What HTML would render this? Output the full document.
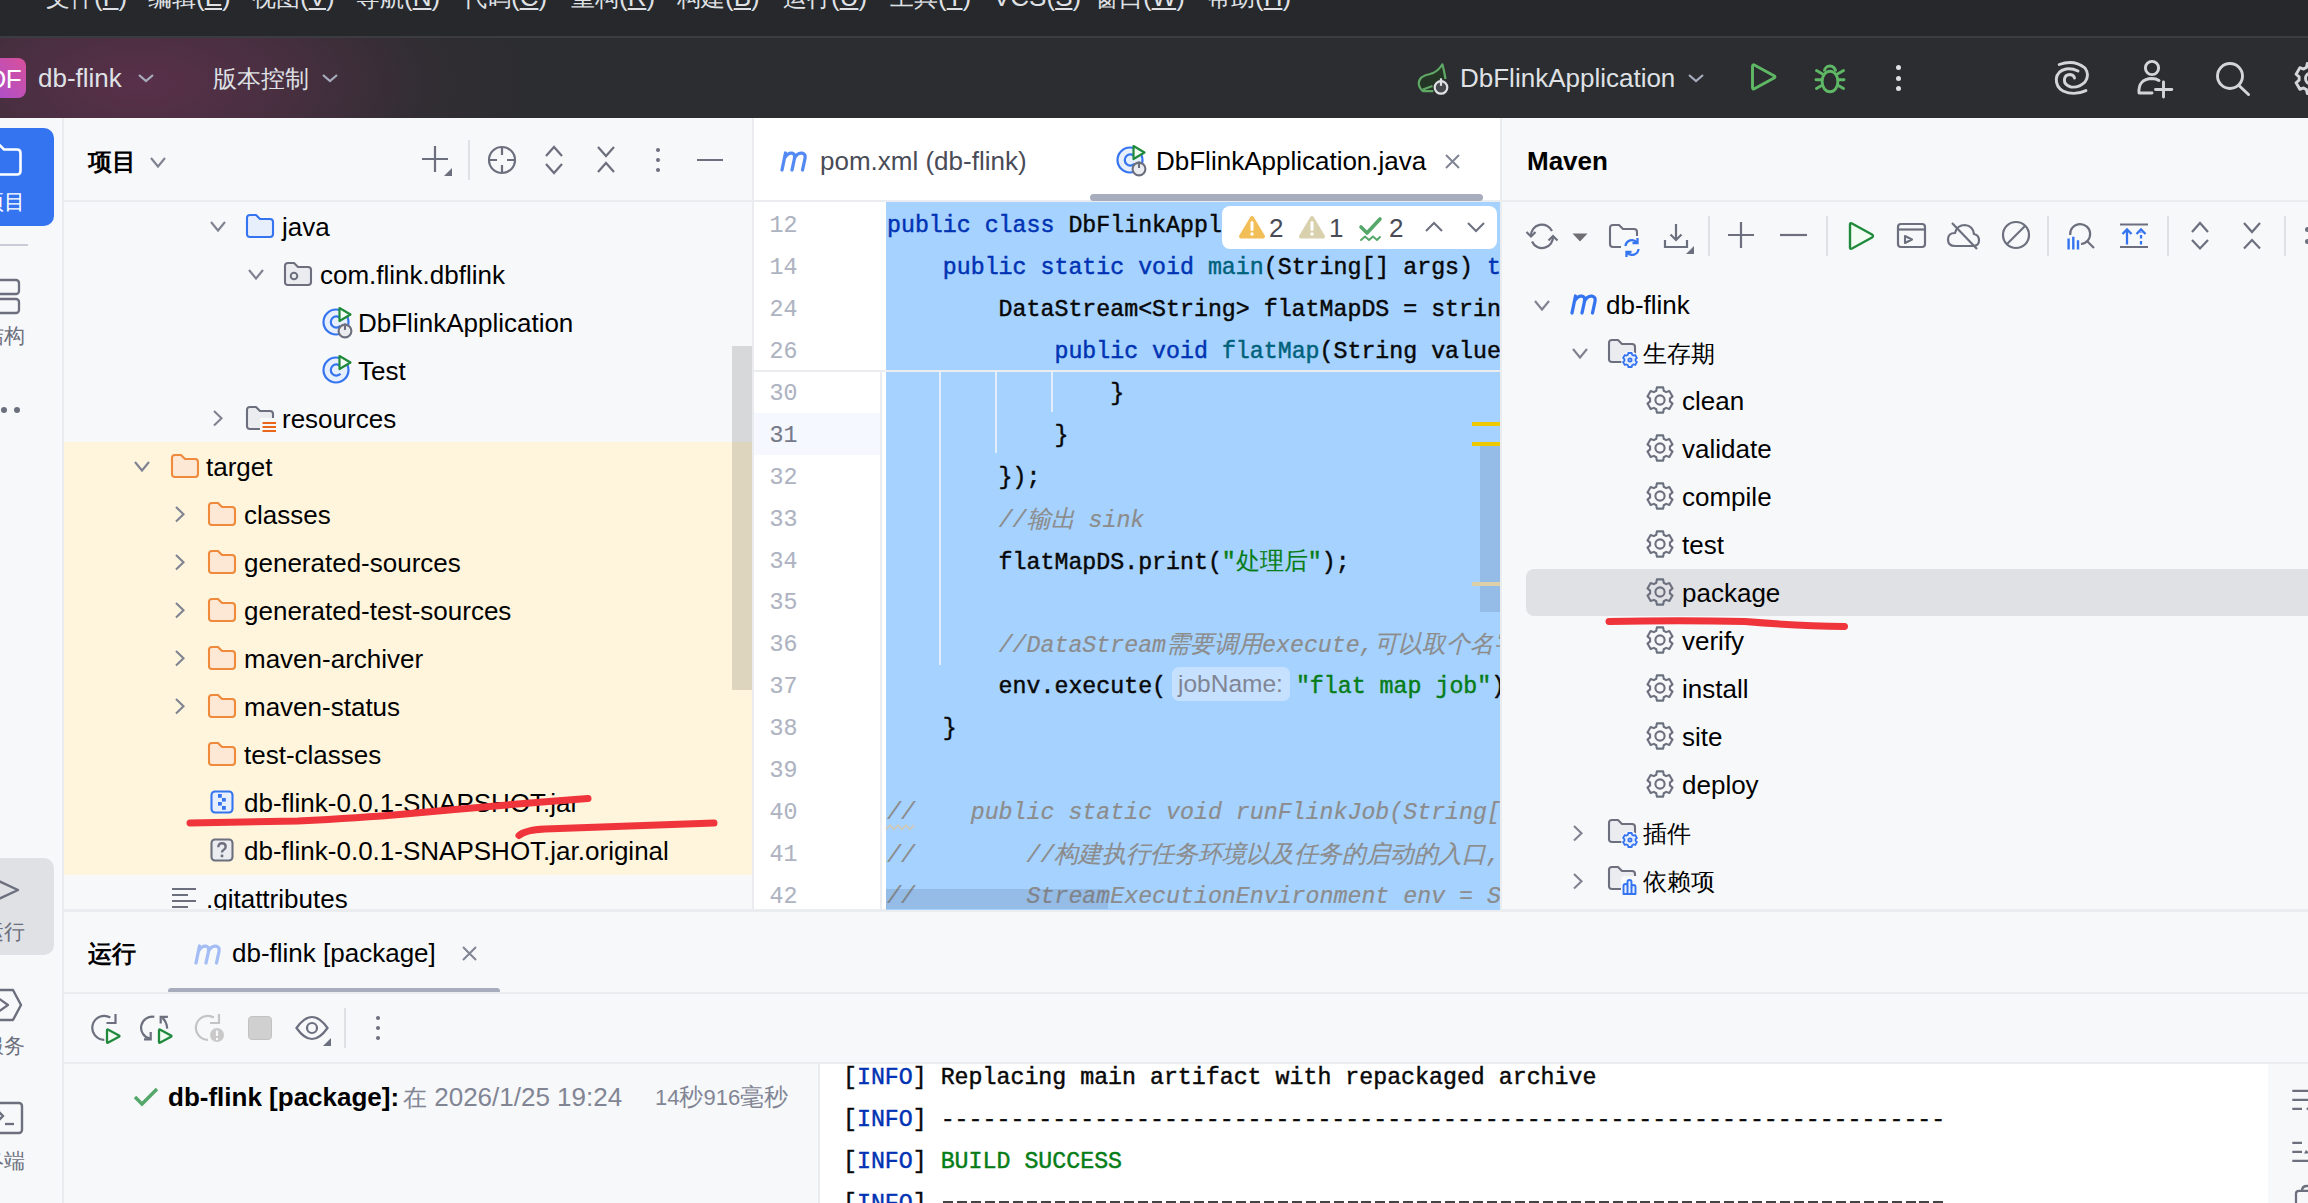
<!DOCTYPE html><html><head><meta charset="utf-8"><title>IDE</title><style>
*{box-sizing:border-box}
html,body{margin:0;padding:0}
body{width:2308px;height:1203px;overflow:hidden;position:relative;background:#f7f8fa;font-family:"Liberation Sans",sans-serif;font-size:26px;color:#000}
.a{position:absolute;white-space:pre}
.cj{font-size:24px}
.m{font-family:"Liberation Mono",monospace;font-size:23.25px;-webkit-text-stroke:0.45px currentColor}
svg{position:absolute;overflow:visible}
.kw{color:#0033b3}
.str{color:#067d17}
.cm{color:#8c8c8c;font-style:italic;-webkit-text-stroke:0.2px currentColor}
.fn{color:#00627a}
.cjm{font-size:24px;-webkit-text-stroke:0.15px currentColor}
.inl{display:inline-block;-webkit-text-stroke:0;font-family:'Liberation Sans',sans-serif;font-size:24.5px;color:#818594;background:rgba(255,255,255,0.35);border-radius:7px;padding:0 7px 0 6px;margin:0 6px 0 6px;line-height:34px;vertical-align:1px}
</style></head><body>
<div class="a" style="left:0;top:0;width:2308px;height:36px;background:#27282c"></div>
<div class="a" style="left:0;top:36px;width:2308px;height:2px;background:#3a3c41"></div>
<div class="a" style="left:46px;top:-21.5px;line-height:36px;color:#dfe1e5"><span class="cj">文件</span>(<u>F</u>)</div>
<div class="a" style="left:148px;top:-21.5px;line-height:36px;color:#dfe1e5"><span class="cj">编辑</span>(<u>E</u>)</div>
<div class="a" style="left:252px;top:-21.5px;line-height:36px;color:#dfe1e5"><span class="cj">视图</span>(<u>V</u>)</div>
<div class="a" style="left:356px;top:-21.5px;line-height:36px;color:#dfe1e5"><span class="cj">导航</span>(<u>N</u>)</div>
<div class="a" style="left:463px;top:-21.5px;line-height:36px;color:#dfe1e5"><span class="cj">代码</span>(<u>C</u>)</div>
<div class="a" style="left:571px;top:-21.5px;line-height:36px;color:#dfe1e5"><span class="cj">重构</span>(<u>R</u>)</div>
<div class="a" style="left:677px;top:-21.5px;line-height:36px;color:#dfe1e5"><span class="cj">构建</span>(<u>B</u>)</div>
<div class="a" style="left:783px;top:-21.5px;line-height:36px;color:#dfe1e5"><span class="cj">运行</span>(<u>U</u>)</div>
<div class="a" style="left:890px;top:-21.5px;line-height:36px;color:#dfe1e5"><span class="cj">工具</span>(<u>T</u>)</div>
<div class="a" style="left:993px;top:-21.5px;line-height:36px;color:#dfe1e5"><span class="">VCS</span>(<u>S</u>)</div>
<div class="a" style="left:1095px;top:-21.5px;line-height:36px;color:#dfe1e5"><span class="cj">窗口</span>(<u>W</u>)</div>
<div class="a" style="left:1207px;top:-21.5px;line-height:36px;color:#dfe1e5"><span class="cj">帮助</span>(<u>H</u>)</div>
<div class="a" style="left:0;top:38px;width:2308px;height:80px;background:#2b2d30"></div>
<div class="a" style="left:0;top:38px;width:900px;height:80px;background:radial-gradient(ellipse 420px 190px at 140px 45px,rgba(122,50,92,0.58) 0%,rgba(112,50,86,0.42) 35%,rgba(80,45,70,0.15) 70%,rgba(43,45,48,0) 100%)"></div>
<div class="a" style="left:-14px;top:58px;width:40px;height:40px;border-radius:8px;background:linear-gradient(45deg,#a84fd2,#d8509a)"></div>
<div class="a" style="left:-12.5px;top:59px;line-height:40px;color:#fff;font-size:26px;letter-spacing:-0.5px">DF</div>
<div class="a" style="left:38px;top:54px;line-height:48px;color:#dfe1e5">db-flink</div>
<div class="a" style="left:213px;top:54px;line-height:48px;color:#dfe1e5"><span class="cj">版本控制</span></div>
<svg style="left:138px;top:74px" width="16" height="8.0"><polyline points="1,1 8.0,7.0 15,1" fill="none" stroke="#a8adbd" stroke-width="2.2"/></svg>
<svg style="left:322px;top:74px" width="16" height="8.0"><polyline points="1,1 8.0,7.0 15,1" fill="none" stroke="#a8adbd" stroke-width="2.2"/></svg>
<div class="a" style="left:1460px;top:54px;line-height:48px;color:#dfe1e5">DbFlinkApplication</div>
<svg style="left:1688px;top:74px" width="16" height="8.0"><polyline points="1,1 8.0,7.0 15,1" fill="none" stroke="#a8adbd" stroke-width="2.2"/></svg>
<div class="a" style="left:62px;top:118px;width:2px;height:1085px;background:#ebecf0"></div>
<div class="a" style="left:64px;top:200px;width:688px;height:2px;background:#ebecf0"></div>
<div class="a" style="left:88px;top:137px;line-height:48px;font-weight:bold"><span class="cj">项目</span></div>
<div class="a" style="left:752px;top:118px;width:2px;height:792px;background:#ebecf0"></div>
<div class="a" style="left:754px;top:118px;width:746px;height:792px;background:#fff"></div>
<div class="a" style="left:754px;top:200px;width:746px;height:2px;background:#ebecf0"></div>
<div class="a" style="left:1500px;top:118px;width:2px;height:792px;background:#ebecf0"></div>
<div class="a" style="left:1502px;top:200px;width:806px;height:2px;background:#ebecf0"></div>
<div class="a" style="left:1527px;top:137px;line-height:48px;font-weight:bold">Maven</div>
<div class="a" style="left:64px;top:909px;width:2244px;height:1px;background:#ebecf0"></div>
<div class="a" style="left:0;top:128px;width:54px;height:98px;border-radius:0 10px 10px 0;background:#3574f0"></div>
<svg style="left:-14px;top:143px" width="36" height="33" viewBox="0 0 36 33"><path d="M1.5,5 Q1.5,1.5 5,1.5 H13 L18,6.5 H31 Q34.5,6.5 34.5,10 V28 Q34.5,31.5 31,31.5 H5 Q1.5,31.5 1.5,28 Z" fill="none" stroke="#fff" stroke-width="2.6"/></svg>
<div class="a" style="left:-17px;top:176px;line-height:48px;color:#fff"><span style="font-size:21px">项目</span></div>
<div class="a" style="left:0;top:244px;width:28px;height:2px;background:#c9ccd6"></div>
<svg style="left:-10px;top:279px" width="32" height="36" viewBox="0 0 32 36"><rect x="1" y="1" width="28" height="14" rx="3" fill="none" stroke="#6c707e" stroke-width="2.3"/><rect x="1" y="20" width="28" height="14" rx="3" fill="none" stroke="#6c707e" stroke-width="2.3"/></svg>
<div class="a" style="left:-17px;top:310px;line-height:48px;color:#6c707e"><span style="font-size:21px">结构</span></div>
<div class="a" style="left:1px;top:407px;width:6px;height:6px;border-radius:3px;background:#6c707e"></div>
<div class="a" style="left:14px;top:407px;width:6px;height:6px;border-radius:3px;background:#6c707e"></div>
<div class="a" style="left:0;top:858px;width:54px;height:97px;border-radius:0 10px 10px 0;background:#dfe1e5"></div>
<svg style="left:-10px;top:876px" width="30" height="28" viewBox="0 0 30 28"><polyline points="2,2 28,14 2,26" fill="none" stroke="#6c707e" stroke-width="2.4" stroke-linejoin="round"/></svg>
<div class="a" style="left:-17px;top:906px;line-height:48px;color:#6c707e"><span style="font-size:21px">运行</span></div>
<svg style="left:-14px;top:988px" width="38" height="34" viewBox="0 0 38 34"><path d="M2,2 H27 L35,17 L27,32 H2" fill="none" stroke="#6c707e" stroke-width="2.4" stroke-linejoin="round"/><path d="M12,10 L22,17 L12,24 Z" fill="none" stroke="#6c707e" stroke-width="2.3" stroke-linejoin="round"/></svg>
<div class="a" style="left:-17px;top:1020px;line-height:48px;color:#6c707e"><span style="font-size:21px">服务</span></div>
<svg style="left:-10px;top:1102px" width="34" height="32" viewBox="0 0 34 32"><rect x="1" y="1" width="31" height="30" rx="3" fill="none" stroke="#6c707e" stroke-width="2.4"/><polyline points="8,9 13,14 8,19" fill="none" stroke="#6c707e" stroke-width="2.3"/><path d="M15,22 H24" stroke="#6c707e" stroke-width="2.3"/></svg>
<div class="a" style="left:-17px;top:1135px;line-height:48px;color:#6c707e"><span style="font-size:21px">终端</span></div>
<svg style="left:150px;top:157px" width="16" height="11.5" viewBox="0 0 16 11.5"><polyline points="1,1 8.0,9.5 15,1" fill="none" stroke="#7f8391" stroke-width="2.1"/></svg>
<svg style="left:420px;top:144px" width="34" height="34" viewBox="0 0 34 34"><path d="M15,2 V28 M2,15 H28" stroke="#6c707e" stroke-width="2.2"/><path d="M32,24 V32 H24 Z" fill="#6c707e"/></svg>
<div class="a" style="left:468px;top:140px;width:2px;height:40px;background:#dfe1e5"></div>
<svg style="left:486px;top:144px" width="32" height="32" viewBox="0 0 32 32"><circle cx="16" cy="16" r="13" fill="none" stroke="#6c707e" stroke-width="2.2"/><path d="M16,3 V11 M16,21 V29 M3,16 H11 M21,16 H29" stroke="#6c707e" stroke-width="2.2"/></svg>
<svg style="left:544px;top:145px" width="20" height="30" viewBox="0 0 20 30"><polyline points="2,11 10.0,2 18,11" fill="none" stroke="#6c707e" stroke-width="2.2"/><polyline points="2,19 10.0,28 18,19" fill="none" stroke="#6c707e" stroke-width="2.2"/></svg>
<svg style="left:596px;top:145px" width="20" height="29" viewBox="0 0 20 29"><polyline points="2,2 10.0,11 18,2" fill="none" stroke="#6c707e" stroke-width="2.2"/><polyline points="2,27 10.0,18 18,27" fill="none" stroke="#6c707e" stroke-width="2.2"/></svg>
<div class="a" style="left:655.5px;top:147.7px;width:4.6px;height:4.6px;border-radius:3px;background:#6c707e"></div>
<div class="a" style="left:655.5px;top:157.7px;width:4.6px;height:4.6px;border-radius:3px;background:#6c707e"></div>
<div class="a" style="left:655.5px;top:167.7px;width:4.6px;height:4.6px;border-radius:3px;background:#6c707e"></div>
<div class="a" style="left:697px;top:159px;width:26px;height:2px;background:#6c707e"></div>
<div class="a" style="left:64px;top:442px;width:688px;height:433px;background:#fff5dc"></div>
<div class="a" style="left:732px;top:346px;width:20px;height:344px;background:rgba(0,0,0,0.13)"></div>
<svg style="left:210px;top:221px" width="16" height="11.5" viewBox="0 0 16 11.5"><polyline points="1,1 8.0,9.5 15,1" fill="none" stroke="#7f8391" stroke-width="2.1"/></svg>
<svg style="left:246px;top:214px" width="28" height="24" viewBox="0 0 28 24"><path d="M1,4 Q1,1 4,1 H10 L14,5 H24 Q27,5 27,8 V20 Q27,23 24,23 H4 Q1,23 1,20 Z" fill="#e7effd" stroke="#3574f0" stroke-width="2.1" stroke-linejoin="round"/></svg>
<div class="a" style="left:282px;top:203px;line-height:48px;">java</div>
<svg style="left:248px;top:269px" width="16" height="11.5" viewBox="0 0 16 11.5"><polyline points="1,1 8.0,9.5 15,1" fill="none" stroke="#7f8391" stroke-width="2.1"/></svg>
<svg style="left:284px;top:262px" width="28" height="24" viewBox="0 0 28 24"><path d="M1,4 Q1,1 4,1 H10 L14,5 H24 Q27,5 27,8 V20 Q27,23 24,23 H4 Q1,23 1,20 Z" fill="#ebecf0" stroke="#6c707e" stroke-width="2.1" stroke-linejoin="round"/><circle cx="10" cy="14" r="3.3" fill="none" stroke="#6c707e" stroke-width="2"/></svg>
<div class="a" style="left:320px;top:251px;line-height:48px;">com.flink.dbflink</div>
<svg style="left:322px;top:306px" width="32" height="34" viewBox="0 0 32 34"><circle cx="14" cy="16" r="12.5" fill="#e7effd" stroke="#3574f0" stroke-width="2.2"/><path d="M18.5,12.2 A5.6,5.6 0 1 0 18.5,19.8" fill="none" stroke="#3574f0" stroke-width="2.2"/><path d="M17.5,2 L28.5,8.5 L17.5,15 Z" fill="#f2fcf3" stroke="#208a3c" stroke-width="2.2" stroke-linejoin="round"/><circle cx="23" cy="25" r="6.4" fill="#ebecf0" stroke="#6c707e" stroke-width="2.1"/><path d="M23,17.5 V24" stroke="#6c707e" stroke-width="2.1"/></svg>
<div class="a" style="left:358px;top:299px;line-height:48px;">DbFlinkApplication</div>
<svg style="left:322px;top:354px" width="32" height="34" viewBox="0 0 32 34"><circle cx="14" cy="16" r="12.5" fill="#e7effd" stroke="#3574f0" stroke-width="2.2"/><path d="M18.5,12.2 A5.6,5.6 0 1 0 18.5,19.8" fill="none" stroke="#3574f0" stroke-width="2.2"/><path d="M17.5,2 L28.5,8.5 L17.5,15 Z" fill="#f2fcf3" stroke="#208a3c" stroke-width="2.2" stroke-linejoin="round"/></svg>
<div class="a" style="left:358px;top:347px;line-height:48px;">Test</div>
<svg style="left:213px;top:410px" width="10.5" height="16.5" viewBox="0 0 10.5 16.5"><polyline points="1,1 8.5,8.25 1,15.5" fill="none" stroke="#7f8391" stroke-width="2.1"/></svg>
<svg style="left:246px;top:406px" width="28" height="24" viewBox="0 0 28 24"><path d="M1,4 Q1,1 4,1 H10 L14,5 H24 Q27,5 27,8 V20 Q27,23 24,23 H4 Q1,23 1,20 Z" fill="#ebecf0" stroke="#6c707e" stroke-width="2.1" stroke-linejoin="round"/></svg>
<svg style="left:260px;top:418px" width="18" height="16" viewBox="0 0 18 16"><rect x="0" y="0" width="18" height="16" fill="#f7f8fa"/><path d="M2.5,5 H16 M2.5,9 H16 M2.5,13 H16" stroke="#e8671a" stroke-width="2"/></svg>
<div class="a" style="left:282px;top:395px;line-height:48px;">resources</div>
<svg style="left:134px;top:461px" width="16" height="11.5" viewBox="0 0 16 11.5"><polyline points="1,1 8.0,9.5 15,1" fill="none" stroke="#7f8391" stroke-width="2.1"/></svg>
<svg style="left:171px;top:454px" width="28" height="24" viewBox="0 0 28 24"><path d="M1,4 Q1,1 4,1 H10 L14,5 H24 Q27,5 27,8 V20 Q27,23 24,23 H4 Q1,23 1,20 Z" fill="#fde8d6" stroke="#ef8a3c" stroke-width="2.1" stroke-linejoin="round"/></svg>
<div class="a" style="left:206px;top:443px;line-height:48px;">target</div>
<svg style="left:175px;top:506px" width="10.5" height="16.5" viewBox="0 0 10.5 16.5"><polyline points="1,1 8.5,8.25 1,15.5" fill="none" stroke="#7f8391" stroke-width="2.1"/></svg>
<svg style="left:208px;top:502px" width="28" height="24" viewBox="0 0 28 24"><path d="M1,4 Q1,1 4,1 H10 L14,5 H24 Q27,5 27,8 V20 Q27,23 24,23 H4 Q1,23 1,20 Z" fill="#fde8d6" stroke="#ef8a3c" stroke-width="2.1" stroke-linejoin="round"/></svg>
<div class="a" style="left:244px;top:491px;line-height:48px;">classes</div>
<svg style="left:175px;top:554px" width="10.5" height="16.5" viewBox="0 0 10.5 16.5"><polyline points="1,1 8.5,8.25 1,15.5" fill="none" stroke="#7f8391" stroke-width="2.1"/></svg>
<svg style="left:208px;top:550px" width="28" height="24" viewBox="0 0 28 24"><path d="M1,4 Q1,1 4,1 H10 L14,5 H24 Q27,5 27,8 V20 Q27,23 24,23 H4 Q1,23 1,20 Z" fill="#fde8d6" stroke="#ef8a3c" stroke-width="2.1" stroke-linejoin="round"/></svg>
<div class="a" style="left:244px;top:539px;line-height:48px;">generated-sources</div>
<svg style="left:175px;top:602px" width="10.5" height="16.5" viewBox="0 0 10.5 16.5"><polyline points="1,1 8.5,8.25 1,15.5" fill="none" stroke="#7f8391" stroke-width="2.1"/></svg>
<svg style="left:208px;top:598px" width="28" height="24" viewBox="0 0 28 24"><path d="M1,4 Q1,1 4,1 H10 L14,5 H24 Q27,5 27,8 V20 Q27,23 24,23 H4 Q1,23 1,20 Z" fill="#fde8d6" stroke="#ef8a3c" stroke-width="2.1" stroke-linejoin="round"/></svg>
<div class="a" style="left:244px;top:587px;line-height:48px;">generated-test-sources</div>
<svg style="left:175px;top:650px" width="10.5" height="16.5" viewBox="0 0 10.5 16.5"><polyline points="1,1 8.5,8.25 1,15.5" fill="none" stroke="#7f8391" stroke-width="2.1"/></svg>
<svg style="left:208px;top:646px" width="28" height="24" viewBox="0 0 28 24"><path d="M1,4 Q1,1 4,1 H10 L14,5 H24 Q27,5 27,8 V20 Q27,23 24,23 H4 Q1,23 1,20 Z" fill="#fde8d6" stroke="#ef8a3c" stroke-width="2.1" stroke-linejoin="round"/></svg>
<div class="a" style="left:244px;top:635px;line-height:48px;">maven-archiver</div>
<svg style="left:175px;top:698px" width="10.5" height="16.5" viewBox="0 0 10.5 16.5"><polyline points="1,1 8.5,8.25 1,15.5" fill="none" stroke="#7f8391" stroke-width="2.1"/></svg>
<svg style="left:208px;top:694px" width="28" height="24" viewBox="0 0 28 24"><path d="M1,4 Q1,1 4,1 H10 L14,5 H24 Q27,5 27,8 V20 Q27,23 24,23 H4 Q1,23 1,20 Z" fill="#fde8d6" stroke="#ef8a3c" stroke-width="2.1" stroke-linejoin="round"/></svg>
<div class="a" style="left:244px;top:683px;line-height:48px;">maven-status</div>
<svg style="left:208px;top:742px" width="28" height="24" viewBox="0 0 28 24"><path d="M1,4 Q1,1 4,1 H10 L14,5 H24 Q27,5 27,8 V20 Q27,23 24,23 H4 Q1,23 1,20 Z" fill="#fde8d6" stroke="#ef8a3c" stroke-width="2.1" stroke-linejoin="round"/></svg>
<div class="a" style="left:244px;top:731px;line-height:48px;">test-classes</div>
<svg style="left:210px;top:789.5px" width="25" height="25" viewBox="0 0 25 25"><rect x="1.5" y="1.5" width="21" height="21" rx="3.5" fill="#e7effd" stroke="#3574f0" stroke-width="2.1"/><rect x="8" y="4" width="3.8" height="3.8" fill="#3574f0"/><rect x="12" y="8" width="3.8" height="3.6" fill="#3574f0"/><rect x="8" y="12" width="3.8" height="3.6" fill="#3574f0"/><rect x="12" y="16" width="3.8" height="3.8" fill="#3574f0"/></svg>
<div class="a" style="left:244px;top:779px;line-height:48px;">db-flink-0.0.1-SNAPSHOT.jar</div>
<svg style="left:210px;top:837.5px" width="25" height="25" viewBox="0 0 25 25"><rect x="1.5" y="1.5" width="21" height="21" rx="3.5" fill="#ebecf0" stroke="#6c707e" stroke-width="2.1"/><path d="M8.3,9.3 Q8.3,5.3 12,5.3 Q15.7,5.3 15.7,8.8 Q15.7,10.8 13.5,12 Q12,12.8 12,14.5" fill="none" stroke="#6c707e" stroke-width="2.4"/><rect x="10.7" y="16.6" width="2.6" height="2.6" fill="#6c707e"/></svg>
<div class="a" style="left:244px;top:827px;line-height:48px;">db-flink-0.0.1-SNAPSHOT.jar.original</div>
<svg style="left:172px;top:887px" width="28" height="26" viewBox="0 0 28 26"><path d="M0,2 H24 M0,8 H16 M0,14 H24 M0,20 H16" stroke="#6c707e" stroke-width="2.1"/></svg>
<div class="a" style="left:206px;top:875px;line-height:48px;">.gitattributes</div>
<svg style="left:779px;top:150px" width="30" height="22" viewBox="0 0 30 22"><path d="M3,20 L6.5,3 M5.6,8 Q9,2.5 13,3.2 Q16.5,4 15.5,8.5 L13,20 M15.3,8.5 Q18.5,2.5 23,3.2 Q27,4 26,8.5 L23.5,20" fill="none" stroke="#3574f0" stroke-width="3.3" stroke-linecap="round" stroke-linejoin="round" opacity="0.85"/></svg>
<div class="a" style="left:820px;top:137px;line-height:48px;color:#494b57">pom.xml (db-flink)</div>
<svg style="left:1116px;top:144px" width="32" height="34" viewBox="0 0 32 34"><circle cx="14" cy="16" r="12.5" fill="#e7effd" stroke="#3574f0" stroke-width="2.2"/><path d="M18.5,12.2 A5.6,5.6 0 1 0 18.5,19.8" fill="none" stroke="#3574f0" stroke-width="2.2"/><path d="M17.5,2 L28.5,8.5 L17.5,15 Z" fill="#f2fcf3" stroke="#208a3c" stroke-width="2.2" stroke-linejoin="round"/><circle cx="23" cy="25" r="6.4" fill="#ebecf0" stroke="#6c707e" stroke-width="2.1"/><path d="M23,17.5 V24" stroke="#6c707e" stroke-width="2.1"/></svg>
<div class="a" style="left:1156px;top:137px;line-height:48px;color:#000">DbFlinkApplication.java</div>
<svg style="left:1444px;top:153px" width="17" height="17" viewBox="0 0 17 17"><path d="M2,2 L15,15 M15,2 L2,15" stroke="#818594" stroke-width="2"/></svg>
<div class="a" style="left:1090px;top:194px;width:393px;height:7px;border-radius:4px;background:#a8adbd"></div>
<div class="a" style="left:754px;top:412.7px;width:126px;height:41.94px;background:#f5f8fe"></div>
<div class="a" style="left:880px;top:372px;width:2px;height:538px;background:#ebecf0"></div>
<div class="a" style="left:886px;top:202px;width:614px;height:708px;background:#a6d2ff"></div>
<div class="a m" style="left:769.6px;top:206.0px;line-height:41.94px;color:#aeb3c2;-webkit-text-stroke:0.1px #aeb3c2">12</div>
<div class="a m" style="left:769.6px;top:247.94px;line-height:41.94px;color:#aeb3c2;-webkit-text-stroke:0.1px #aeb3c2">14</div>
<div class="a m" style="left:769.6px;top:289.88px;line-height:41.94px;color:#aeb3c2;-webkit-text-stroke:0.1px #aeb3c2">24</div>
<div class="a m" style="left:769.6px;top:331.82px;line-height:41.94px;color:#aeb3c2;-webkit-text-stroke:0.1px #aeb3c2">26</div>
<div class="a m" style="left:769.6px;top:373.76px;line-height:41.94px;color:#aeb3c2;-webkit-text-stroke:0.1px #aeb3c2">30</div>
<div class="a m" style="left:769.6px;top:415.7px;line-height:41.94px;color:#767a8a;-webkit-text-stroke:0.1px #767a8a">31</div>
<div class="a m" style="left:769.6px;top:457.64px;line-height:41.94px;color:#aeb3c2;-webkit-text-stroke:0.1px #aeb3c2">32</div>
<div class="a m" style="left:769.6px;top:499.58px;line-height:41.94px;color:#aeb3c2;-webkit-text-stroke:0.1px #aeb3c2">33</div>
<div class="a m" style="left:769.6px;top:541.52px;line-height:41.94px;color:#aeb3c2;-webkit-text-stroke:0.1px #aeb3c2">34</div>
<div class="a m" style="left:769.6px;top:583.46px;line-height:41.94px;color:#aeb3c2;-webkit-text-stroke:0.1px #aeb3c2">35</div>
<div class="a m" style="left:769.6px;top:625.4px;line-height:41.94px;color:#aeb3c2;-webkit-text-stroke:0.1px #aeb3c2">36</div>
<div class="a m" style="left:769.6px;top:667.3399999999999px;line-height:41.94px;color:#aeb3c2;-webkit-text-stroke:0.1px #aeb3c2">37</div>
<div class="a m" style="left:769.6px;top:709.28px;line-height:41.94px;color:#aeb3c2;-webkit-text-stroke:0.1px #aeb3c2">38</div>
<div class="a m" style="left:769.6px;top:751.22px;line-height:41.94px;color:#aeb3c2;-webkit-text-stroke:0.1px #aeb3c2">39</div>
<div class="a m" style="left:769.6px;top:793.16px;line-height:41.94px;color:#aeb3c2;-webkit-text-stroke:0.1px #aeb3c2">40</div>
<div class="a m" style="left:769.6px;top:835.0999999999999px;line-height:41.94px;color:#aeb3c2;-webkit-text-stroke:0.1px #aeb3c2">41</div>
<div class="a m" style="left:769.6px;top:877.04px;line-height:41.94px;color:#aeb3c2;-webkit-text-stroke:0.1px #aeb3c2">42</div>
<div class="a" style="left:754px;top:370px;width:746px;height:2px;background:#ebecf0"></div>
<div class="a" style="left:939px;top:372px;width:2px;height:293px;background:#e3eefb"></div>
<div class="a" style="left:995px;top:372px;width:2px;height:81px;background:#e3eefb"></div>
<div class="a" style="left:1051px;top:372px;width:2px;height:40px;background:#e3eefb"></div>
<div class="a" style="left:886px;top:201px;width:614px;height:709px;overflow:hidden">
<div class="a m" style="left:1px;top:5.0px;line-height:41.94px;color:#080808"><span class="kw">public</span> <span class="kw">class</span> DbFlinkAppl</div>
<div class="a m" style="left:1px;top:46.94px;line-height:41.94px;color:#080808">    <span class="kw">public</span> <span class="kw">static</span> <span class="kw">void</span> <span class="fn">main</span>(String[] args) <span class="kw">t</span></div>
<div class="a m" style="left:1px;top:88.88px;line-height:41.94px;color:#080808">        DataStream&lt;String&gt; flatMapDS = strin</div>
<div class="a m" style="left:1px;top:130.82px;line-height:41.94px;color:#080808">            <span class="kw">public</span> <span class="kw">void</span> <span class="fn">flatMap</span>(String value</div>
<div class="a m" style="left:1px;top:172.76px;line-height:41.94px;color:#080808">                }</div>
<div class="a m" style="left:1px;top:214.7px;line-height:41.94px;color:#080808">            }</div>
<div class="a m" style="left:1px;top:256.64px;line-height:41.94px;color:#080808">        });</div>
<div class="a m" style="left:1px;top:298.58px;line-height:41.94px;color:#080808">        <span class="cm">//<span class="cjm">输出</span> sink</span></div>
<div class="a m" style="left:1px;top:340.52px;line-height:41.94px;color:#080808">        flatMapDS.print(<span class="str">"</span><span class="str cjm">处理后</span><span class="str">"</span>);</div>
<div class="a m" style="left:1px;top:382.46000000000004px;line-height:41.94px;color:#080808"></div>
<div class="a m" style="left:1px;top:424.4px;line-height:41.94px;color:#080808">        <span class="cm">//DataStream<span class="cjm">需要调用</span>execute,<span class="cjm">可以取个名字</span></span></div>
<div class="a m" style="left:1px;top:466.3399999999999px;line-height:41.94px;color:#080808">        env.execute(<span class="inl">jobName:</span><span class="str">"flat map job"</span>);</div>
<div class="a m" style="left:1px;top:508.28px;line-height:41.94px;color:#080808">    }</div>
<div class="a m" style="left:1px;top:550.22px;line-height:41.94px;color:#080808"></div>
<div class="a m" style="left:1px;top:592.16px;line-height:41.94px;color:#080808"><span class="cm">//    public static void runFlinkJob(String[] args)</span></div>
<div class="a m" style="left:1px;top:634.0999999999999px;line-height:41.94px;color:#080808"><span class="cm">//        //<span class="cjm">构建执行任务环境以及任务的启动的入口</span>,</span></div>
<div class="a m" style="left:1px;top:676.04px;line-height:41.94px;color:#080808"><span class="cm">//        StreamExecutionEnvironment env = StreamExecutionEnvironment</span></div>
</div>
<svg style="left:884px;top:822px" width="32" height="10" viewBox="0 0 32 10"><polyline points="2,7.3 6,3.2 10,7.3 14,3.2 18,7.3 22,3.2 26,7.3 30,3.2" fill="none" stroke="#cdc8b8" stroke-width="1.8"/></svg>
<div class="a" style="left:1222px;top:206px;width:275px;height:43px;border-radius:8px;background:#fff"></div>
<svg style="left:1239px;top:215px" width="26" height="24" viewBox="0 0 26 24"><path d="M13,3 L24,21.5 H2 Z" fill="#f2be57" stroke="#f2be57" stroke-width="4" stroke-linejoin="round"/><path d="M13,7.5 V14.5" stroke="#fff" stroke-width="3" stroke-linecap="round"/><circle cx="13" cy="19" r="1.7" fill="#fff"/></svg>
<div class="a" style="left:1269px;top:204px;line-height:48px;color:#494b57">2</div>
<svg style="left:1299px;top:215px" width="26" height="24" viewBox="0 0 26 24"><path d="M13,3 L24,21.5 H2 Z" fill="#d9d0ad" stroke="#d9d0ad" stroke-width="4" stroke-linejoin="round"/><path d="M13,7.5 V14.5" stroke="#fff" stroke-width="3" stroke-linecap="round"/><circle cx="13" cy="19" r="1.7" fill="#fff"/></svg>
<div class="a" style="left:1329px;top:204px;line-height:48px;color:#494b57">1</div>
<svg style="left:1357px;top:214px" width="28" height="30" viewBox="0 0 28 30"><polyline points="4,13 10,19 23,5" fill="none" stroke="#55a76a" stroke-width="3.6" stroke-linecap="round" stroke-linejoin="round"/><polyline points="4,26 8,22.5 12,26 16,22.5 20,26 23,23" fill="none" stroke="#55a76a" stroke-width="1.9" stroke-linecap="round" stroke-linejoin="round"/></svg>
<div class="a" style="left:1389px;top:204px;line-height:48px;color:#494b57">2</div>
<svg style="left:1425px;top:221px" width="18" height="11" viewBox="0 0 18 11"><polyline points="1,10 9,2 17,10" fill="none" stroke="#6c707e" stroke-width="2"/></svg>
<svg style="left:1467px;top:222px" width="18" height="11" viewBox="0 0 18 11"><polyline points="1,1 9,9 17,1" fill="none" stroke="#6c707e" stroke-width="2"/></svg>
<div class="a" style="left:1472px;top:422px;width:28px;height:4px;background:#eec800"></div>
<div class="a" style="left:1480px;top:444px;width:20px;height:168px;background:rgba(80,100,130,0.2)"></div>
<div class="a" style="left:1472px;top:442px;width:28px;height:4px;background:#eec800"></div>
<div class="a" style="left:1472px;top:582px;width:28px;height:4px;background:#dcd0a8"></div>
<div class="a" style="left:886px;top:889px;width:222px;height:20px;background:rgba(80,100,130,0.2)"></div>
<svg style="left:1525px;top:219px" width="36" height="34" viewBox="0 0 36 34"><path d="M6,17 A11,11 0 0 1 27,12" fill="none" stroke="#6c707e" stroke-width="2.2"/><polyline points="1.5,13 6,17.5 10.5,13" fill="none" stroke="#6c707e" stroke-width="2.2"/><path d="M28,17 A11,11 0 0 1 7,22.5" fill="none" stroke="#6c707e" stroke-width="2.2"/><polyline points="23.5,21.5 28,17 32.5,21.5" fill="none" stroke="#6c707e" stroke-width="2.2"/></svg>
<svg style="left:1571px;top:219px" width="18" height="34" viewBox="0 0 18 34"><path d="M1.5,14.5 H16.5 L9,22.5 Z" fill="#6e6e73"/></svg>
<svg style="left:1609px;top:224px" width="34" height="36" viewBox="0 0 34 36"><path d="M1,13 V4 Q1,1 4,1 H10 L14,5 H25 Q28,5 28,8 V12 M1,13 V20 Q1,23 4,23 H12" fill="none" stroke="#6c707e" stroke-width="2.1" stroke-linejoin="round"/><path d="M16.5,22 A6.5,6.5 0 0 1 28,18.5" fill="none" stroke="#3574f0" stroke-width="2.3"/><polyline points="28.5,14 28.5,19 23.5,19" fill="none" stroke="#3574f0" stroke-width="2.3"/><path d="M29.5,25 A6.5,6.5 0 0 1 18,28.5" fill="none" stroke="#3574f0" stroke-width="2.3"/><polyline points="17.5,33 17.5,28 22.5,28" fill="none" stroke="#3574f0" stroke-width="2.3"/></svg>
<svg style="left:1662px;top:219px" width="34" height="36" viewBox="0 0 34 36"><path d="M14,5 V21 M8.5,15.5 L14,21 L19.5,15.5" fill="none" stroke="#6c707e" stroke-width="2.2"/><path d="M3,21 V28 H25 V21" fill="none" stroke="#6c707e" stroke-width="2.2"/><path d="M32,27 V35 H24 Z" fill="#6c707e"/></svg>
<div class="a" style="left:1708px;top:216px;width:2px;height:40px;background:#dfe1e5"></div>
<svg style="left:1726px;top:220px" width="30" height="30" viewBox="0 0 30 30"><path d="M15,2 V28 M2,15 H28" stroke="#6c707e" stroke-width="2.2"/></svg>
<svg style="left:1779px;top:220px" width="30" height="30" viewBox="0 0 30 30"><path d="M1,15 H28" stroke="#6c707e" stroke-width="2.2"/></svg>
<div class="a" style="left:1826px;top:216px;width:2px;height:40px;background:#dfe1e5"></div>
<svg style="left:1846px;top:221px" width="30" height="30" viewBox="0 0 30 30"><path d="M4,3.5 Q4,1.5 6,2.5 L26,13.5 Q28,15 26,16.5 L6,27.5 Q4,28.5 4,26.5 Z" fill="#f2fcf3" stroke="#208a3c" stroke-width="2.4" stroke-linejoin="round"/></svg>
<svg style="left:1896px;top:219px" width="34" height="34" viewBox="0 0 34 34"><rect x="2" y="5" width="27" height="23" rx="3" fill="none" stroke="#6c707e" stroke-width="2.2"/><path d="M2,10.5 H29" stroke="#6c707e" stroke-width="2.2"/><path d="M9,17 L16,20.5 L9,24 Z" fill="none" stroke="#6c707e" stroke-width="2.1" stroke-linejoin="round"/></svg>
<svg style="left:1946px;top:219px" width="36" height="34" viewBox="0 0 36 34"><path d="M9,27 Q2,27 2,20.5 Q2,14 9,14 Q11,6 19,6 Q27,7 28,15 Q33,16 33,21.5 Q33,27 27,27 Z" fill="none" stroke="#6c707e" stroke-width="2.2"/><path d="M6,4 L31,30" stroke="#6c707e" stroke-width="2.2"/></svg>
<svg style="left:2000px;top:219px" width="34" height="34" viewBox="0 0 34 34"><circle cx="16" cy="16" r="13" fill="none" stroke="#6c707e" stroke-width="2.2"/><path d="M7,25 L25,7" stroke="#6c707e" stroke-width="2.2"/></svg>
<div class="a" style="left:2047px;top:216px;width:2px;height:40px;background:#dfe1e5"></div>
<svg style="left:2066px;top:219px" width="34" height="34" viewBox="0 0 34 34"><path d="M4.2,16 A10,10 0 1 1 15,25" fill="none" stroke="#6c707e" stroke-width="2.2"/><path d="M21,22 L28,29" stroke="#6c707e" stroke-width="2.2"/><path d="M2.6,19.5 V30.5 M7.3,17.7 V30.5 M12,21.3 V30.5" stroke="#3574f0" stroke-width="2.4"/></svg>
<svg style="left:2118px;top:219px" width="34" height="34" viewBox="0 0 34 34"><path d="M2,5.5 H30 M2,28 H30" stroke="#6c707e" stroke-width="2.2"/><path d="M9,25.5 V11 M4.5,15 L9,10.5 L13.5,15" fill="none" stroke="#3574f0" stroke-width="2.3"/><path d="M23,25.5 V13" fill="none" stroke="#3574f0" stroke-width="2.3" stroke-dasharray="3.5 2.5"/><path d="M18.5,15 L23,10.5 L27.5,15" fill="none" stroke="#3574f0" stroke-width="2.3"/></svg>
<div class="a" style="left:2167px;top:216px;width:2px;height:40px;background:#dfe1e5"></div>
<svg style="left:2190px;top:221px" width="20" height="29.5" viewBox="0 0 20 29.5"><polyline points="2,11 10.0,2 18,11" fill="none" stroke="#6c707e" stroke-width="2.2"/><polyline points="2,19 10.0,27.5 18,19" fill="none" stroke="#6c707e" stroke-width="2.2"/></svg>
<svg style="left:2242px;top:221px" width="20" height="29.5" viewBox="0 0 20 29.5"><polyline points="2,2 10.0,11 18,2" fill="none" stroke="#6c707e" stroke-width="2.2"/><polyline points="2,27.5 10.0,19 18,27.5" fill="none" stroke="#6c707e" stroke-width="2.2"/></svg>
<div class="a" style="left:2284px;top:216px;width:2px;height:40px;background:#dfe1e5"></div>
<div class="a" style="left:2305px;top:227px;width:5px;height:5px;border-radius:3px;background:#6c707e"></div>
<div class="a" style="left:2305px;top:239px;width:5px;height:5px;border-radius:3px;background:#6c707e"></div>
<div class="a" style="left:1526px;top:569px;width:800px;height:47px;border-radius:8px;background:#dfe1e5"></div>
<svg style="left:1534px;top:300px" width="16" height="11.5" viewBox="0 0 16 11.5"><polyline points="1,1 8.0,9.5 15,1" fill="none" stroke="#7f8391" stroke-width="2.1"/></svg>
<svg style="left:1569px;top:293px" width="30" height="22" viewBox="0 0 30 22"><path d="M3,20 L6.5,3 M5.6,8 Q9,2.5 13,3.2 Q16.5,4 15.5,8.5 L13,20 M15.3,8.5 Q18.5,2.5 23,3.2 Q27,4 26,8.5 L23.5,20" fill="none" stroke="#3574f0" stroke-width="3.3" stroke-linecap="round" stroke-linejoin="round" opacity="1"/></svg>
<div class="a" style="left:1606px;top:281px;line-height:48px;">db-flink</div>
<svg style="left:1572px;top:348px" width="16" height="11.5" viewBox="0 0 16 11.5"><polyline points="1,1 8.0,9.5 15,1" fill="none" stroke="#7f8391" stroke-width="2.1"/></svg>
<svg style="left:1608px;top:339px" width="28" height="24" viewBox="0 0 28 24"><path d="M1,4 Q1,1 4,1 H10 L14,5 H24 Q27,5 27,8 V20 Q27,23 24,23 H4 Q1,23 1,20 Z" fill="#ebecf0" stroke="#6c707e" stroke-width="2.1" stroke-linejoin="round"/></svg>
<svg style="left:1621px;top:351px" width="18" height="18" viewBox="0 0 18 18"><circle cx="9" cy="9" r="9" fill="#f7f8fa"/><path d="M7.26,2.01 L10.74,2.01 L11.10,3.81 L12.45,4.59 L14.18,4.00 L15.92,7.02 L14.55,8.22 L14.55,9.78 L15.92,10.98 L14.18,14.00 L12.45,13.41 L11.10,14.19 L10.74,15.99 L7.26,15.99 L6.90,14.19 L5.55,13.41 L3.82,14.00 L2.08,10.98 L3.45,9.78 L3.45,8.22 L2.08,7.02 L3.82,4.00 L5.55,4.59 L6.90,3.81 Z" fill="#e7effd" stroke="#3574f0" stroke-width="1.8" stroke-linejoin="round"/><circle cx="9" cy="9" r="1.6" fill="none" stroke="#3574f0" stroke-width="1.8"/></svg>
<div class="a" style="left:1643px;top:329px;line-height:48px;"><span class="cj">生存期</span></div>
<svg style="left:1644px;top:384px" width="32" height="32" viewBox="0 0 32 32"><path d="M12.86,3.39 L19.14,3.39 L19.75,6.73 L22.16,8.12 L25.35,6.97 L28.50,12.42 L25.90,14.61 L25.90,17.39 L28.50,19.58 L25.35,25.03 L22.16,23.88 L19.75,25.27 L19.14,28.61 L12.86,28.61 L12.25,25.27 L9.84,23.88 L6.65,25.03 L3.50,19.58 L6.10,17.39 L6.10,14.61 L3.50,12.42 L6.65,6.97 L9.84,8.12 L12.25,6.73 Z" fill="none" stroke="#6c707e" stroke-width="2.1" stroke-linejoin="round"/><circle cx="16" cy="16" r="4.6" fill="none" stroke="#6c707e" stroke-width="2.1"/></svg>
<div class="a" style="left:1682px;top:377px;line-height:48px;">clean</div>
<svg style="left:1644px;top:432px" width="32" height="32" viewBox="0 0 32 32"><path d="M12.86,3.39 L19.14,3.39 L19.75,6.73 L22.16,8.12 L25.35,6.97 L28.50,12.42 L25.90,14.61 L25.90,17.39 L28.50,19.58 L25.35,25.03 L22.16,23.88 L19.75,25.27 L19.14,28.61 L12.86,28.61 L12.25,25.27 L9.84,23.88 L6.65,25.03 L3.50,19.58 L6.10,17.39 L6.10,14.61 L3.50,12.42 L6.65,6.97 L9.84,8.12 L12.25,6.73 Z" fill="none" stroke="#6c707e" stroke-width="2.1" stroke-linejoin="round"/><circle cx="16" cy="16" r="4.6" fill="none" stroke="#6c707e" stroke-width="2.1"/></svg>
<div class="a" style="left:1682px;top:425px;line-height:48px;">validate</div>
<svg style="left:1644px;top:480px" width="32" height="32" viewBox="0 0 32 32"><path d="M12.86,3.39 L19.14,3.39 L19.75,6.73 L22.16,8.12 L25.35,6.97 L28.50,12.42 L25.90,14.61 L25.90,17.39 L28.50,19.58 L25.35,25.03 L22.16,23.88 L19.75,25.27 L19.14,28.61 L12.86,28.61 L12.25,25.27 L9.84,23.88 L6.65,25.03 L3.50,19.58 L6.10,17.39 L6.10,14.61 L3.50,12.42 L6.65,6.97 L9.84,8.12 L12.25,6.73 Z" fill="none" stroke="#6c707e" stroke-width="2.1" stroke-linejoin="round"/><circle cx="16" cy="16" r="4.6" fill="none" stroke="#6c707e" stroke-width="2.1"/></svg>
<div class="a" style="left:1682px;top:473px;line-height:48px;">compile</div>
<svg style="left:1644px;top:528px" width="32" height="32" viewBox="0 0 32 32"><path d="M12.86,3.39 L19.14,3.39 L19.75,6.73 L22.16,8.12 L25.35,6.97 L28.50,12.42 L25.90,14.61 L25.90,17.39 L28.50,19.58 L25.35,25.03 L22.16,23.88 L19.75,25.27 L19.14,28.61 L12.86,28.61 L12.25,25.27 L9.84,23.88 L6.65,25.03 L3.50,19.58 L6.10,17.39 L6.10,14.61 L3.50,12.42 L6.65,6.97 L9.84,8.12 L12.25,6.73 Z" fill="none" stroke="#6c707e" stroke-width="2.1" stroke-linejoin="round"/><circle cx="16" cy="16" r="4.6" fill="none" stroke="#6c707e" stroke-width="2.1"/></svg>
<div class="a" style="left:1682px;top:521px;line-height:48px;">test</div>
<svg style="left:1644px;top:576px" width="32" height="32" viewBox="0 0 32 32"><path d="M12.86,3.39 L19.14,3.39 L19.75,6.73 L22.16,8.12 L25.35,6.97 L28.50,12.42 L25.90,14.61 L25.90,17.39 L28.50,19.58 L25.35,25.03 L22.16,23.88 L19.75,25.27 L19.14,28.61 L12.86,28.61 L12.25,25.27 L9.84,23.88 L6.65,25.03 L3.50,19.58 L6.10,17.39 L6.10,14.61 L3.50,12.42 L6.65,6.97 L9.84,8.12 L12.25,6.73 Z" fill="none" stroke="#6c707e" stroke-width="2.1" stroke-linejoin="round"/><circle cx="16" cy="16" r="4.6" fill="none" stroke="#6c707e" stroke-width="2.1"/></svg>
<div class="a" style="left:1682px;top:569px;line-height:48px;">package</div>
<svg style="left:1644px;top:624px" width="32" height="32" viewBox="0 0 32 32"><path d="M12.86,3.39 L19.14,3.39 L19.75,6.73 L22.16,8.12 L25.35,6.97 L28.50,12.42 L25.90,14.61 L25.90,17.39 L28.50,19.58 L25.35,25.03 L22.16,23.88 L19.75,25.27 L19.14,28.61 L12.86,28.61 L12.25,25.27 L9.84,23.88 L6.65,25.03 L3.50,19.58 L6.10,17.39 L6.10,14.61 L3.50,12.42 L6.65,6.97 L9.84,8.12 L12.25,6.73 Z" fill="none" stroke="#6c707e" stroke-width="2.1" stroke-linejoin="round"/><circle cx="16" cy="16" r="4.6" fill="none" stroke="#6c707e" stroke-width="2.1"/></svg>
<div class="a" style="left:1682px;top:617px;line-height:48px;">verify</div>
<svg style="left:1644px;top:672px" width="32" height="32" viewBox="0 0 32 32"><path d="M12.86,3.39 L19.14,3.39 L19.75,6.73 L22.16,8.12 L25.35,6.97 L28.50,12.42 L25.90,14.61 L25.90,17.39 L28.50,19.58 L25.35,25.03 L22.16,23.88 L19.75,25.27 L19.14,28.61 L12.86,28.61 L12.25,25.27 L9.84,23.88 L6.65,25.03 L3.50,19.58 L6.10,17.39 L6.10,14.61 L3.50,12.42 L6.65,6.97 L9.84,8.12 L12.25,6.73 Z" fill="none" stroke="#6c707e" stroke-width="2.1" stroke-linejoin="round"/><circle cx="16" cy="16" r="4.6" fill="none" stroke="#6c707e" stroke-width="2.1"/></svg>
<div class="a" style="left:1682px;top:665px;line-height:48px;">install</div>
<svg style="left:1644px;top:720px" width="32" height="32" viewBox="0 0 32 32"><path d="M12.86,3.39 L19.14,3.39 L19.75,6.73 L22.16,8.12 L25.35,6.97 L28.50,12.42 L25.90,14.61 L25.90,17.39 L28.50,19.58 L25.35,25.03 L22.16,23.88 L19.75,25.27 L19.14,28.61 L12.86,28.61 L12.25,25.27 L9.84,23.88 L6.65,25.03 L3.50,19.58 L6.10,17.39 L6.10,14.61 L3.50,12.42 L6.65,6.97 L9.84,8.12 L12.25,6.73 Z" fill="none" stroke="#6c707e" stroke-width="2.1" stroke-linejoin="round"/><circle cx="16" cy="16" r="4.6" fill="none" stroke="#6c707e" stroke-width="2.1"/></svg>
<div class="a" style="left:1682px;top:713px;line-height:48px;">site</div>
<svg style="left:1644px;top:768px" width="32" height="32" viewBox="0 0 32 32"><path d="M12.86,3.39 L19.14,3.39 L19.75,6.73 L22.16,8.12 L25.35,6.97 L28.50,12.42 L25.90,14.61 L25.90,17.39 L28.50,19.58 L25.35,25.03 L22.16,23.88 L19.75,25.27 L19.14,28.61 L12.86,28.61 L12.25,25.27 L9.84,23.88 L6.65,25.03 L3.50,19.58 L6.10,17.39 L6.10,14.61 L3.50,12.42 L6.65,6.97 L9.84,8.12 L12.25,6.73 Z" fill="none" stroke="#6c707e" stroke-width="2.1" stroke-linejoin="round"/><circle cx="16" cy="16" r="4.6" fill="none" stroke="#6c707e" stroke-width="2.1"/></svg>
<div class="a" style="left:1682px;top:761px;line-height:48px;">deploy</div>
<svg style="left:1573px;top:825px" width="10.5" height="16.5" viewBox="0 0 10.5 16.5"><polyline points="1,1 8.5,8.25 1,15.5" fill="none" stroke="#7f8391" stroke-width="2.1"/></svg>
<svg style="left:1608px;top:819px" width="28" height="24" viewBox="0 0 28 24"><path d="M1,4 Q1,1 4,1 H10 L14,5 H24 Q27,5 27,8 V20 Q27,23 24,23 H4 Q1,23 1,20 Z" fill="#ebecf0" stroke="#6c707e" stroke-width="2.1" stroke-linejoin="round"/></svg>
<svg style="left:1621px;top:831px" width="18" height="18" viewBox="0 0 18 18"><circle cx="9" cy="9" r="9" fill="#f7f8fa"/><path d="M7.26,2.01 L10.74,2.01 L11.10,3.81 L12.45,4.59 L14.18,4.00 L15.92,7.02 L14.55,8.22 L14.55,9.78 L15.92,10.98 L14.18,14.00 L12.45,13.41 L11.10,14.19 L10.74,15.99 L7.26,15.99 L6.90,14.19 L5.55,13.41 L3.82,14.00 L2.08,10.98 L3.45,9.78 L3.45,8.22 L2.08,7.02 L3.82,4.00 L5.55,4.59 L6.90,3.81 Z" fill="#e7effd" stroke="#3574f0" stroke-width="1.8" stroke-linejoin="round"/><circle cx="9" cy="9" r="1.6" fill="none" stroke="#3574f0" stroke-width="1.8"/></svg>
<div class="a" style="left:1643px;top:809px;line-height:48px;"><span class="cj">插件</span></div>
<svg style="left:1573px;top:873px" width="10.5" height="16.5" viewBox="0 0 10.5 16.5"><polyline points="1,1 8.5,8.25 1,15.5" fill="none" stroke="#7f8391" stroke-width="2.1"/></svg>
<svg style="left:1608px;top:866px" width="28" height="24" viewBox="0 0 28 24"><path d="M1,4 Q1,1 4,1 H10 L14,5 H24 Q27,5 27,8 V20 Q27,23 24,23 H4 Q1,23 1,20 Z" fill="#ebecf0" stroke="#6c707e" stroke-width="2.1" stroke-linejoin="round"/></svg>
<svg style="left:1621px;top:876px" width="20" height="20" viewBox="0 0 20 20"><rect x="0" y="0" width="20" height="20" rx="3" fill="#f7f8fa"/><path d="M2.5,18 V10 Q2.5,8 4.5,8 Q6.5,8 6.5,10 V6 Q6.5,4 8.5,4 Q10.5,4 10.5,6 V11 Q10.5,9 12.5,9 Q14.5,9 14.5,11 V18 Z" fill="#e7effd" stroke="#3574f0" stroke-width="1.9" stroke-linejoin="round"/><path d="M6.5,10 V18 M10.5,11 V18" stroke="#3574f0" stroke-width="1.9"/></svg>
<div class="a" style="left:1643px;top:857px;line-height:48px;"><span class="cj">依赖项</span></div>
<svg style="left:1416px;top:62px" width="36" height="36" viewBox="0 0 36 36"><path d="M29.5,17 Q28,8 26.4,2.3 Q22,10 14,12 Q3,14 2.7,21.3 Q3,26 6.9,29.1 H18 L22,20 Z" fill="#253525" stroke="none"/><path d="M29.5,17 Q28,8 26.4,2.3 Q22,10 14,12 Q3,14 2.7,21.3 Q3,26 6.9,29.1 H17.3" fill="none" stroke="#5fa866" stroke-width="2.2" stroke-linejoin="round"/><path d="M6.9,27.5 L16.5,24" stroke="#5fa866" stroke-width="2.2"/><circle cx="25" cy="25.4" r="6.3" fill="#47484d" stroke="#dfe1e5" stroke-width="2.2"/><path d="M25,16.3 V23.8" stroke="#dfe1e5" stroke-width="2.2"/></svg>
<svg style="left:1746px;top:60px" width="34" height="36" viewBox="0 0 34 36"><path d="M6.5,6.5 Q6.5,4 8.8,5.2 L28,15.7 Q30,16.9 28,18.1 L8.8,28.6 Q6.5,29.8 6.5,27.3 Z" fill="none" stroke="#5fb865" stroke-width="2.9" stroke-linejoin="round"/></svg>
<svg style="left:1810px;top:58px" width="40" height="40" viewBox="0 0 40 40"><ellipse cx="20" cy="23.5" rx="7.9" ry="10.3" fill="none" stroke="#5fb865" stroke-width="2.9"/><path d="M14.5,13.5 A5.5,5.5 0 0 1 25.5,13.5" fill="none" stroke="#5fb865" stroke-width="2.9"/><path d="M6.5,12.6 L12.5,16 M6,21.8 H12 M6.5,30.5 L12.5,27 M33.5,12.6 L27.5,16 M34,21.8 H28 M33.5,30.5 L27.5,27" stroke="#5fb865" stroke-width="2.9" stroke-linecap="round"/></svg>
<div class="a" style="left:1895.5px;top:64.8px;width:5px;height:5px;border-radius:3px;background:#dfe1e5"></div>
<div class="a" style="left:1895.5px;top:75.6px;width:5px;height:5px;border-radius:3px;background:#dfe1e5"></div>
<div class="a" style="left:1895.5px;top:86.3px;width:5px;height:5px;border-radius:3px;background:#dfe1e5"></div>
<svg style="left:2052px;top:58px" width="40" height="40" viewBox="0 0 40 40"><path d="M7.2,6.5 Q22,1 33,10 Q38,17 33,24 Q27,30 19,29 Q12,27 12.4,21.5 Q13,16.5 18,16.5 Q22,17 22.5,20" fill="none" stroke="#d3d5da" stroke-width="2.9" stroke-linecap="round"/><path d="M33.9,32.6 Q22,38 11,33 Q4,29 4.3,21 Q5,13 14,11 Q20,10 26,13" fill="none" stroke="#d3d5da" stroke-width="2.9" stroke-linecap="round"/></svg>
<svg style="left:2132px;top:56px" width="44" height="44" viewBox="0 0 44 44"><circle cx="20" cy="12" r="6.6" fill="none" stroke="#d3d5da" stroke-width="2.9"/><path d="M20,37 H7 Q6,23 20,22.5 Q24,22.5 27,24.5" fill="none" stroke="#d3d5da" stroke-width="2.9" stroke-linecap="round" stroke-linejoin="round"/><path d="M31.5,26 V41 M23.5,33.5 H39.8" stroke="#d3d5da" stroke-width="2.9" stroke-linecap="round"/></svg>
<svg style="left:2212px;top:59px" width="44" height="44" viewBox="0 0 44 44"><circle cx="18" cy="17" r="12.5" fill="none" stroke="#d3d5da" stroke-width="2.9"/><path d="M27.5,27 L36.5,35.5" stroke="#d3d5da" stroke-width="3" stroke-linecap="round"/></svg>
<svg style="left:2290px;top:58px" width="44" height="44" viewBox="0 0 44 44"><path d="M17.25,5.46 L24.75,5.46 L25.50,9.37 L28.39,11.04 L32.15,9.73 L35.90,16.23 L32.88,18.83 L32.88,22.17 L35.90,24.77 L32.15,31.27 L28.39,29.96 L25.50,31.63 L24.75,35.54 L17.25,35.54 L16.50,31.63 L13.61,29.96 L9.85,31.27 L6.10,24.77 L9.12,22.17 L9.12,18.83 L6.10,16.23 L9.85,9.73 L13.61,11.04 L16.50,9.37 Z" fill="none" stroke="#d3d5da" stroke-width="2.9" stroke-linejoin="round"/><circle cx="21" cy="20.5" r="5.5" fill="none" stroke="#d3d5da" stroke-width="2.9"/></svg>
<div class="a" style="left:64px;top:910px;width:2244px;height:293px;background:#f7f8fa"></div>
<div class="a" style="left:64px;top:910px;width:2244px;height:2px;background:#ebecf0"></div>
<div class="a" style="left:88px;top:929px;line-height:48px;font-weight:bold"><span class="cj">运行</span></div>
<svg style="left:193px;top:943px" width="30" height="22" viewBox="0 0 30 22"><path d="M3,20 L6.5,3 M5.6,8 Q9,2.5 13,3.2 Q16.5,4 15.5,8.5 L13,20 M15.3,8.5 Q18.5,2.5 23,3.2 Q27,4 26,8.5 L23.5,20" fill="none" stroke="#a4bdf5" stroke-width="3.3" stroke-linecap="round" stroke-linejoin="round" opacity="1"/></svg>
<div class="a" style="left:232px;top:929px;line-height:48px;color:#000">db-flink [package]</div>
<svg style="left:461px;top:945px" width="17" height="17" viewBox="0 0 17 17"><path d="M2,2 L15,15 M15,2 L2,15" stroke="#818594" stroke-width="2"/></svg>
<div class="a" style="left:168px;top:988px;width:332px;height:6px;border-radius:3px;background:#a8adbd"></div>
<div class="a" style="left:64px;top:992px;width:2244px;height:2px;background:#ebecf0"></div>
<svg style="left:88px;top:1010px" width="36" height="36" viewBox="0 0 36 36"><path d="M22.3,7.5 A12,12 0 1 0 16.3,29.9" fill="none" stroke="#6c707e" stroke-width="2.2"/><polyline points="18.5,13 27.5,13 27.5,4" fill="none" stroke="#6c707e" stroke-width="2.2"/><path d="M19,20.5 Q19,19 20.3,19.7 L31,25.4 Q32,26.1 31,26.8 L20.3,32.6 Q19,33.3 19,31.8 Z" fill="#f2fcf3" stroke="#208a3c" stroke-width="2.3" stroke-linejoin="round"/></svg>
<svg style="left:140px;top:1010px" width="36" height="36" viewBox="0 0 36 36"><path d="M14.3,6.9 A11,11 0 0 0 10,28.6" fill="none" stroke="#6c707e" stroke-width="2.2"/><polyline points="10.7,22 10.7,29.3 4,29.3" fill="none" stroke="#6c707e" stroke-width="2.2"/><path d="M27.2,18.6 Q26.5,11 22.5,8" fill="none" stroke="#6c707e" stroke-width="2.2"/><polyline points="27.9,6.9 20.7,6.9 20.7,13.6" fill="none" stroke="#6c707e" stroke-width="2.2"/><path d="M19,20.5 Q19,19 20.3,19.7 L31,25.4 Q32,26.1 31,26.8 L20.3,32.6 Q19,33.3 19,31.8 Z" fill="#f2fcf3" stroke="#208a3c" stroke-width="2.3" stroke-linejoin="round"/></svg>
<svg style="left:192px;top:1010px" width="36" height="36" viewBox="0 0 36 36"><path d="M21.9,7.5 A12,12 0 1 0 15.9,29.9" fill="none" stroke="#c4c4c4" stroke-width="2.2"/><polyline points="18,13 27,13 27,4" fill="none" stroke="#c4c4c4" stroke-width="2.2"/><circle cx="25" cy="25" r="7" fill="#c9c9c9"/><path d="M25,20.5 V26" stroke="#f7f8fa" stroke-width="2.2"/><circle cx="25" cy="29" r="1.2" fill="#f7f8fa"/></svg>
<div class="a" style="left:248px;top:1016px;width:24px;height:24px;border-radius:4px;background:#d0d0d0;border:1.5px solid #c2c2c2"></div>
<svg style="left:295px;top:1010px" width="40" height="38" viewBox="0 0 40 38"><path d="M1.5,18 Q17,-4 32.5,18 Q17,40 1.5,18 Z" fill="none" stroke="#6c707e" stroke-width="2.2"/><circle cx="17" cy="18" r="5" fill="none" stroke="#6c707e" stroke-width="2.2"/><path d="M36,28 V36 H28 Z" fill="#6c707e"/></svg>
<div class="a" style="left:344px;top:1008px;width:2px;height:40px;background:#dfe1e5"></div>
<div class="a" style="left:375.5px;top:1015.7px;width:4.6px;height:4.6px;border-radius:3px;background:#6c707e"></div>
<div class="a" style="left:375.5px;top:1025.7px;width:4.6px;height:4.6px;border-radius:3px;background:#6c707e"></div>
<div class="a" style="left:375.5px;top:1035.7px;width:4.6px;height:4.6px;border-radius:3px;background:#6c707e"></div>
<div class="a" style="left:64px;top:1062px;width:2244px;height:2px;background:#ebecf0"></div>
<svg style="left:132px;top:1086px" width="28" height="22" viewBox="0 0 28 22"><polyline points="3,11 10,18 25,3" fill="none" stroke="#55a76a" stroke-width="3.4"/></svg>
<div class="a" style="left:168px;top:1073px;line-height:48px;font-weight:bold">db-flink [package]:</div>
<div class="a" style="left:403px;top:1073px;line-height:48px;color:#818594"><span class="cj">在</span> 2026/1/25 19:24</div>
<div class="a" style="left:655px;top:1073px;line-height:48px;color:#818594;font-size:22px">14<span class="cj">秒</span>916<span class="cj">毫秒</span></div>
<div class="a" style="left:818px;top:1064px;width:2px;height:139px;background:#ebecf0"></div>
<div class="a" style="left:820px;top:1064px;width:1448px;height:139px;background:#fff"></div>
<div class="a m" style="left:843px;top:1058.0px;line-height:41.94px;color:#080808">[<span style="color:#0033b3">INFO</span>] Replacing main artifact with repackaged archive</div>
<div class="a m" style="left:843px;top:1099.94px;line-height:41.94px;color:#080808">[<span style="color:#0033b3">INFO</span>] ------------------------------------------------------------------------</div>
<div class="a m" style="left:843px;top:1141.88px;line-height:41.94px;color:#080808">[<span style="color:#0033b3">INFO</span>] <span style="color:#067d17">BUILD SUCCESS</span></div>
<div class="a m" style="left:843px;top:1183.82px;line-height:41.94px;color:#080808">[<span style="color:#0033b3">INFO</span>] </div>
<div class="a" style="left:943px;top:1201px;width:1004.4px;height:2px;background:repeating-linear-gradient(90deg,#444 0,#444 10px,transparent 10px,transparent 13.95px)"></div>
<svg style="left:2290px;top:1080px" width="30" height="130" viewBox="0 0 30 130"><path d="M2.3,10.9 H30 M2.3,19.8 H30 M2.3,28.8 H12 M2.3,62.9 H12 M2.3,71.8 H12 M2.3,80.9 H30" stroke="#6c707e" stroke-width="2.3"/><path d="M16,28.8 L20,25.5 V32 Z M16,70 L20,73.5 H14 Z" fill="#6c707e"/><path d="M6,130 V113.5 Q6,110.8 9,110.8 H30 M12,110.8 Q12,106 17,106 H30" fill="none" stroke="#6c707e" stroke-width="2.3"/></svg>
<svg style="left:0px;top:0px" width="2308" height="1203" viewBox="0 0 2308 1203"><path d="M190,823 Q240,822 298,821 Q360,818 405,814 Q500,805 588,798.5" fill="none" stroke="#f0343c" stroke-width="7" stroke-linecap="round" stroke-linejoin="round"/><path d="M519,835.5 Q525,830 545,829 Q640,826 714,823" fill="none" stroke="#f0343c" stroke-width="7" stroke-linecap="round"/><path d="M1609,621.5 Q1680,620 1745,621.5 Q1800,626 1844.5,626.5" fill="none" stroke="#f0343c" stroke-width="7" stroke-linecap="round"/></svg>
</body></html>
